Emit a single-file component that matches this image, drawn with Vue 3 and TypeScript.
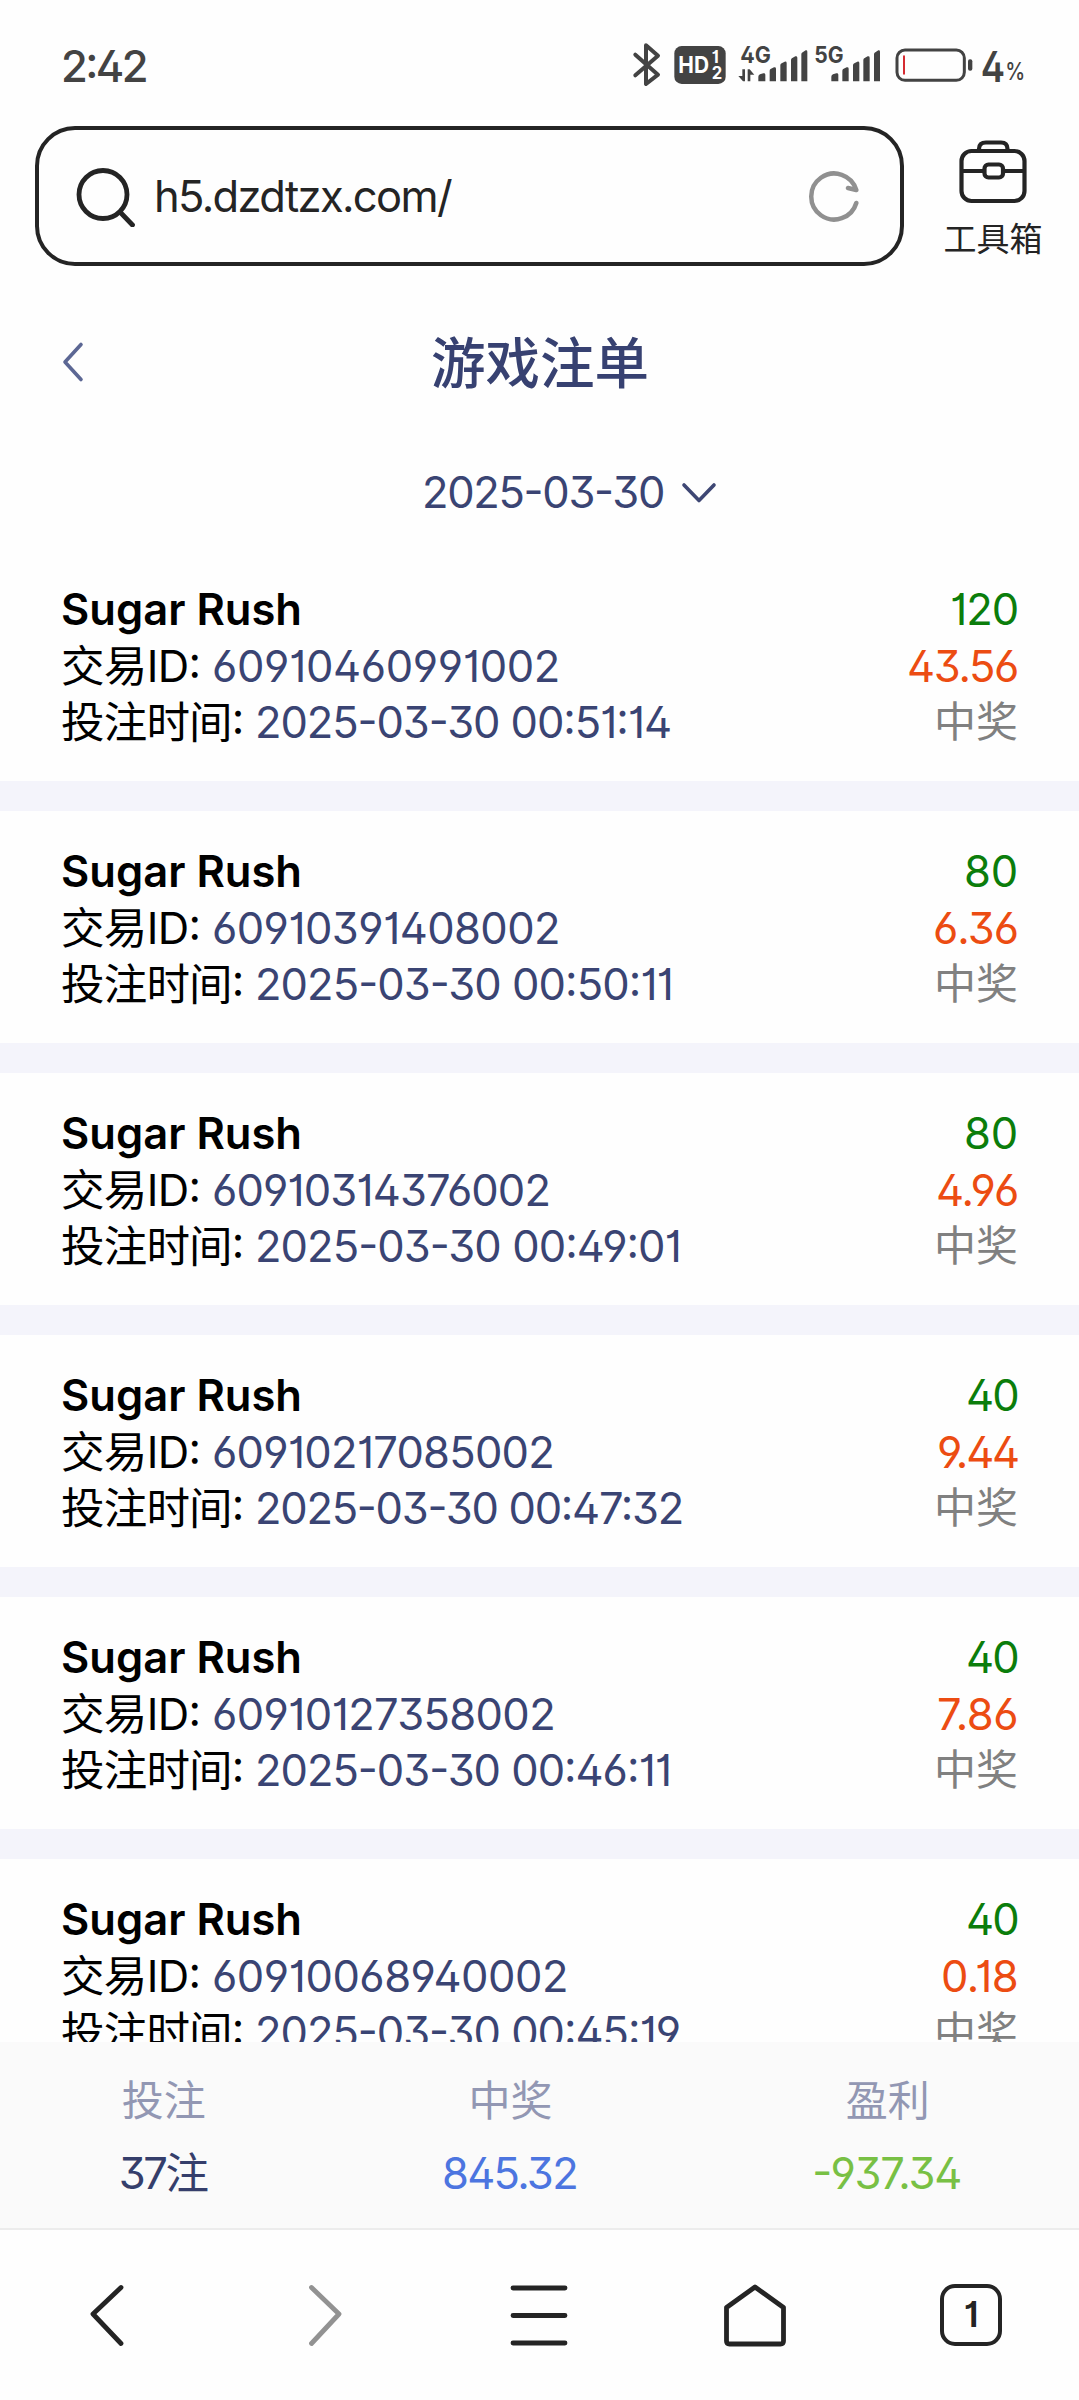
<script setup lang="ts">
interface Bet {
  id: string
  idWidth: number
  time: string
  timeWidth: number
  stake: string
  stakeWidth: number
  win: string
  winWidth: number
}

const bets: Bet[] = [
  { id: '60910460991002', idWidth: 348, time: '2025-03-30 00:51:14', timeWidth: 416, stake: '120', stakeWidth: 68, win: '43.56', winWidth: 111 },
  { id: '60910391408002', idWidth: 348, time: '2025-03-30 00:50:11', timeWidth: 418, stake: '80', stakeWidth: 54, win: '6.36', winWidth: 85 },
  { id: '60910314376002', idWidth: 338, time: '2025-03-30 00:49:01', timeWidth: 426, stake: '80', stakeWidth: 54, win: '4.96', winWidth: 82 },
  { id: '60910217085002', idWidth: 342, time: '2025-03-30 00:47:32', timeWidth: 428, stake: '40', stakeWidth: 52, win: '9.44', winWidth: 81 },
  { id: '60910127358002', idWidth: 343, time: '2025-03-30 00:46:11', timeWidth: 416, stake: '40', stakeWidth: 52, win: '7.86', winWidth: 81 },
  { id: '60910068940002', idWidth: 356, time: '2025-03-30 00:45:19', timeWidth: 425, stake: '40', stakeWidth: 52, win: '0.18', winWidth: 77 },
]

const totals = [
  { label: '投注', value: '37注', width: 88, kind: 'count' },
  { label: '中奖', value: '845.32', width: 135, kind: 'won' },
  { label: '盈利', value: '-937.34', width: 149, kind: 'profit' },
]

// Tracks a run of text so that it takes the given width.
const vFit = {
  mounted(el: HTMLElement, binding: { value: number }) {
    const natural = el.getBoundingClientRect().width
    const count = (el.textContent ?? '').length
    el.style.letterSpacing = `${(binding.value - natural) / count}px`
  },
}
</script>

<template>
  <div class="screen">
    <header class="status">
      <span v-fit="85" class="clock">2:42</span>
      <svg class="status-icons" width="479" height="90" viewBox="0 0 1437 270">
        <path class="bt" d="M106 104 L174 164 L138 192 V76 L174 107 L106 166" />
        <rect x="223" y="78" width="154" height="114" rx="22" fill="#434343" />
        <text x="235" y="158" class="hd" textLength="92" lengthAdjust="spacingAndGlyphs">HD</text>
        <text x="335" y="129" class="mini">1</text>
        <text x="335" y="178" class="mini">2</text>
        <text x="421" y="129" class="net" textLength="92" lengthAdjust="spacingAndGlyphs">4G</text>
        <text x="643" y="129" class="net" textLength="88" lengthAdjust="spacingAndGlyphs">5G</text>
        <g fill="#434343">
          <path d="M427 148 h8 v36 h-6 L415 168 h12z M443 184 V148 h6 L463 164 h-12 v20z" />
          <path d="M475 184 V170 q0-5 5-7 l10-3 q6-1 6 4 V184z M509 184 V152 q0-4 4-6 l9-4 q6-1 6 4 V184z M541 184 V136 q0-4 4-6 l9-5 q6-1 6 4 V184z M573 184 V120 q0-4 4-6 l9-5 q6-1 6 4 V184z M604 184 V103 q0-4 4-6 l9-6 q5-1 5 4 V184z" />
          <path d="M694 184 V170 q0-5 5-7 l10-3 q6-1 6 4 V184z M727 184 V152 q0-4 4-6 l9-4 q6-1 6 4 V184z M759 184 V136 q0-4 4-6 l9-5 q6-1 6 4 V184z M790 184 V120 q0-4 4-6 l9-5 q6-1 6 4 V184z M822 184 V103 q0-4 4-6 l9-6 q5-1 5 4 V184z" />
          <rect x="1104" y="118" width="13" height="34" rx="6" />
        </g>
        <rect x="891" y="90" width="202" height="91" rx="24" fill="none" stroke="#434343" stroke-width="9" />
        <rect x="909" y="106" width="6" height="58" rx="3" fill="#d52b31" />
        <text x="1142" y="185" class="pct-num" textLength="73" lengthAdjust="spacingAndGlyphs">4</text>
        <text x="1216" y="180" class="pct" textLength="60" lengthAdjust="spacingAndGlyphs">%</text>
      </svg>
    </header>

    <div class="toolbar">
      <div class="address">
        <svg width="62" height="62" viewBox="0 0 62 62" fill="none" stroke="#242424" stroke-width="4.8" stroke-linecap="round">
          <circle cx="29" cy="29.500" r="24" />
          <path d="M46.500 47.500 L58.500 60" />
        </svg>
        <span class="url"><span v-fit="297">h5.dzdtzx.com/</span></span>
        <svg class="reload" width="54" height="54" viewBox="0 0 54 54" fill="none" stroke="#909090" stroke-width="4.500" stroke-linecap="round" stroke-linejoin="round">
          <path d="M49.300 34 A23 23 0 1 1 49.300 21 L41 19" />
        </svg>
      </div>
      <div class="tools">
        <svg width="70" height="64" viewBox="0 0 70 64" fill="none" stroke="#242424" stroke-width="4.200">
          <rect x="3.500" y="11" width="63" height="50" rx="10" />
          <path d="M21 10.500 V9 Q21 2.500 28 2.500 H43 Q49.500 2.500 49.500 9 V10.500" />
          <path d="M3.500 31 H26.500 M45 31 H66.500" />
          <rect x="26.500" y="24.500" width="18.500" height="13" rx="4" />
        </svg>
        <span>工具箱</span>
      </div>
    </div>

    <div class="heading">
      <svg class="back" width="28" height="44" viewBox="0 0 28 44" fill="none" stroke="#5c6794" stroke-width="3.600" stroke-linecap="round" stroke-linejoin="round">
        <path d="M22 4.500 L6 22 L22 39.500" />
      </svg>
      <h1>游戏注单</h1>
    </div>

    <div class="date">
      <span v-fit="242">2025-03-30</span>
      <svg width="36" height="22" viewBox="0 0 36 22" fill="none" stroke="#3e4774" stroke-width="3.600" stroke-linecap="round" stroke-linejoin="round">
        <path d="M3 3 L18 18.500 L33 3" />
      </svg>
    </div>

    <main class="list">
      <article v-for="bet in bets" :key="bet.id" class="bet">
        <div class="row">
          <strong><span v-fit="241">Sugar Rush</span></strong>
          <span v-fit="bet.stakeWidth" class="stake">{{ bet.stake }}</span>
        </div>
        <div class="row">
          <span class="field"><span v-fit="151" class="label">交易ID: </span><span v-fit="bet.idWidth" class="data">{{ bet.id }}</span></span>
          <span v-fit="bet.winWidth" class="win">{{ bet.win }}</span>
        </div>
        <div class="row">
          <span class="field"><span v-fit="194" class="label">投注时间: </span><span v-fit="bet.timeWidth" class="data">{{ bet.time }}</span></span>
          <span class="state">中奖</span>
        </div>
      </article>
    </main>

    <footer class="totals">
      <div v-for="total in totals" :key="total.label" class="total">
        <span class="caption">{{ total.label }}</span>
        <span v-fit="total.width" :class="total.kind">{{ total.value }}</span>
      </div>
    </footer>

    <nav class="nav">
      <div>
        <svg width="64" height="64" viewBox="0 0 64 64"><path d="M45 4.500 L17 31 L45 60.500" /></svg>
      </div>
      <div>
        <svg class="off" width="64" height="64" viewBox="0 0 64 64"><path d="M19.500 4.500 L47 31 L19.500 60.500" /></svg>
      </div>
      <div>
        <svg width="64" height="64" viewBox="0 0 64 64"><path d="M6 5 H58 M6 32.500 H58 M6 60 H58" /></svg>
      </div>
      <div>
        <svg width="64" height="64" viewBox="0 0 64 64"><path d="M32 4 L60.500 24.500 V58 Q60.500 61 57.500 61 H6.500 Q3.500 61 3.500 58 V24.500 Z" /></svg>
      </div>
      <div>
        <span class="tabs">1</span>
      </div>
    </nav>
  </div>
</template>

<style>
body {
  margin: 0;
  background: #fefefe;
}
</style>

<style scoped>
.screen {
  display: flex;
  flex-direction: column;
  width: 1079px;
  height: 2400px;
  overflow: hidden;
  background: #fefefe;
  color: #000;
  font-family: Inter, "Noto Sans CJK SC", sans-serif;
  font-size: 43.500px;
  font-feature-settings: "cv01", "cv02", "cv03", "cv04", "cv09", "case";
  line-height: 56.600px;
  white-space: pre;
}

.status {
  display: flex;
  justify-content: space-between;
  height: 90px;
  padding: 20px 0 0 61px;
}

.clock {
  margin-top: 18px;
  color: #434343;
  font-weight: 500;
}

.status-icons {
  font-family: Inter, sans-serif;
}

.bt {
  fill: none;
  stroke: #434343;
  stroke-width: 12;
  stroke-linejoin: round;
  stroke-linecap: round;
}

.hd {
  fill: #fff;
  font-size: 70px;
  font-weight: 700;
}

.mini {
  fill: #fff;
  font-size: 50px;
  font-weight: 700;
}

.net {
  fill: #434343;
  font-size: 68px;
  font-weight: 700;
}

.pct-num {
  fill: #434343;
  font-size: 128px;
  font-weight: 600;
}

.pct {
  fill: #434343;
  font-size: 72px;
  font-weight: 500;
}

.toolbar {
  display: flex;
  height: 140px;
  padding: 16px 35px 0 35px;
}

.address {
  display: flex;
  align-items: center;
  box-sizing: border-box;
  width: 870px;
  height: 140px;
  padding: 0 39px 0 35px;
  border: 4px solid #242424;
  border-radius: 40px;
  color: #242424;
}

.url {
  flex: 1;
  margin-left: 18px;
}

.tools {
  display: flex;
  flex-direction: column;
  align-items: center;
  width: 102px;
  margin-left: 38px;
  padding-top: 14px;
  color: #242424;
  font-size: 33px;
  line-height: 40px;
}

.tools span {
  margin-top: 15px;
}

.heading {
  display: flex;
  align-items: center;
  height: 80px;
  margin-top: 56px;
  padding: 0 59px;
}

.heading h1 {
  flex: 1;
  margin: 2px 27px 0 0;
  color: #374171;
  font-size: 54.500px;
  font-weight: 500;
  line-height: 80px;
  text-align: center;
}

.date {
  display: flex;
  align-items: center;
  gap: 17px;
  height: 57px;
  margin-top: 62px;
  padding-left: 422px;
  color: #3a4473;
}

.list {
  flex: 1;
  min-height: 0;
  margin-top: 28px;
  overflow: hidden;
}

.bet {
  height: 169px;
  padding: 32px 61px 31px 61px;
  border-bottom: 30px solid #f4f4fb;
}

.row {
  display: flex;
  justify-content: space-between;
  height: 56.600px;
}

.row strong {
  font-weight: 600;
}

.field {
  display: flex;
}

.data {
  color: #3a4473;
}

.stake {
  color: #0b7d0b;
}

.win {
  color: #ec4c12;
}

.state {
  color: #808080;
  font-size: 42px;
}

.totals {
  display: flex;
  justify-content: space-around;
  box-sizing: border-box;
  height: 188px;
  padding: 31px 0 0 1px;
  border-bottom: 2px solid #ececec;
  background: #fafafa;
}

.total {
  display: flex;
  flex-direction: column;
  align-items: center;
  gap: 15px;
}

.caption {
  padding-left: 2px;
  color: #9297b3;
  font-size: 42px;
}

.count {
  color: #353e6b;
}

.won {
  color: #4c75e0;
}

.profit {
  color: #78c044;
}

.nav {
  display: flex;
  height: 170px;
}

.nav div {
  display: flex;
  flex: 1;
  align-items: center;
  justify-content: center;
}

.nav svg {
  fill: none;
  stroke: #242424;
  stroke-width: 4.800;
  stroke-linecap: round;
  stroke-linejoin: round;
}

.nav svg.off {
  stroke: #929292;
}

.tabs {
  box-sizing: border-box;
  width: 62px;
  height: 62px;
  border: 4px solid #242424;
  border-radius: 15px;
  color: #242424;
  font-size: 36px;
  font-weight: 600;
  line-height: 52px;
  text-align: center;
}
</style>
